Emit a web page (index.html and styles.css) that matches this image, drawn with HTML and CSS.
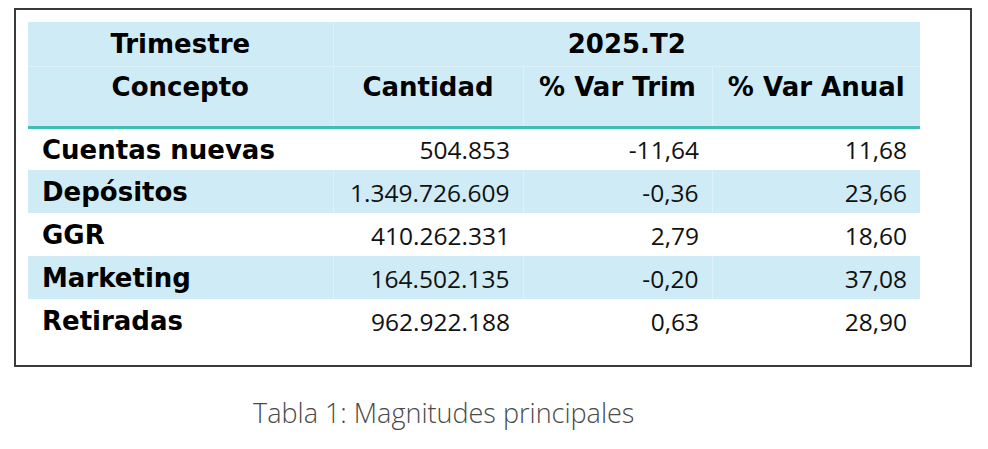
FILE: index.html
```html
<!DOCTYPE html>
<html lang="es">
<head>
<meta charset="utf-8">
<link rel="stylesheet" href="styles.css">
</head>
<body>
<div class="frame">
  <table class="data">
    <colgroup>
      <col class="c1"><col class="c2"><col class="c3"><col class="c4">
    </colgroup>
    <thead>
      <tr class="h1">
        <th>Trimestre</th>
        <th colspan="3">2025.T2</th>
      </tr>
      <tr class="h2">
        <th>Concepto</th>
        <th>Cantidad</th>
        <th>% Var Trim</th>
        <th>% Var Anual</th>
      </tr>
    </thead>
    <tbody>
      <tr><td class="lbl">Cuentas nuevas</td><td>504.853</td><td>-11,64</td><td>11,68</td></tr>
      <tr class="alt"><td class="lbl">Depósitos</td><td>1.349.726.609</td><td>-0,36</td><td>23,66</td></tr>
      <tr><td class="lbl">GGR</td><td>410.262.331</td><td>2,79</td><td>18,60</td></tr>
      <tr class="alt"><td class="lbl">Marketing</td><td>164.502.135</td><td>-0,20</td><td>37,08</td></tr>
      <tr><td class="lbl">Retiradas</td><td>962.922.188</td><td>0,63</td><td>28,90</td></tr>
    </tbody>
  </table>
</div>
<p class="caption">Tabla 1: Magnitudes principales</p>
</body>
</html>
```

FILE: styles.css
```css
html, body {
  margin: 0;
  padding: 0;
  background: #ffffff;
}

.frame {
  box-sizing: border-box;
  margin: 8px 0 0 14px;
  width: 958px;
  height: 359px;
  border: 2px solid #3a3a3a;
  padding: 12px 0 0 12px;
}

.data {
  border-collapse: collapse;
  table-layout: fixed;
  width: 892px;
}

.c1 { width: 305px; }
.c2 { width: 190px; }
.c3 { width: 189px; }
.c4 { width: 208px; }

.data th {
  background: #cfebf5;
  font-family: "DejaVu Sans", "Liberation Sans", sans-serif;
  font-weight: bold;
  font-size: 26px;
  color: #000;
  text-align: center;
  padding: 0;
  border-left: 1px solid #dcf1f8;
}

.data th:first-child {
  border-left: none;
}

.h1 th {
  height: 44px;
  padding-top: 1px;
  box-sizing: border-box;
  border-bottom: 1px solid #dcf1f8;
}

.h2 th {
  height: 61px;
  vertical-align: top;
  padding-top: 5px;
  box-sizing: border-box;
  border-bottom: 3px solid #3fbdb6;
}

.data td {
  height: 43px;
  padding: 1px 13px 0 0;
  font-family: "Open Sans", "Noto Sans", sans-serif;
  font-size: 24.5px;
  color: #111;
  text-align: right;
  vertical-align: middle;
  box-sizing: border-box;
}

.data td.lbl {
  text-align: left;
  padding: 1px 0 0 14px;
  font-family: "DejaVu Sans", "Liberation Sans", sans-serif;
  font-weight: bold;
  font-size: 26px;
  color: #000;
}

.data tr.alt td {
  background: #cfebf5;
  border-left: 1px solid #dcf1f8;
}

.data tr.alt td:first-child {
  border-left: none;
}

.caption {
  margin: 27px 0 0 253px;
  font-family: "Open Sans", "Noto Sans", sans-serif;
  font-weight: 300;
  font-size: 27px;
  color: #4a4a4a;
}
```
